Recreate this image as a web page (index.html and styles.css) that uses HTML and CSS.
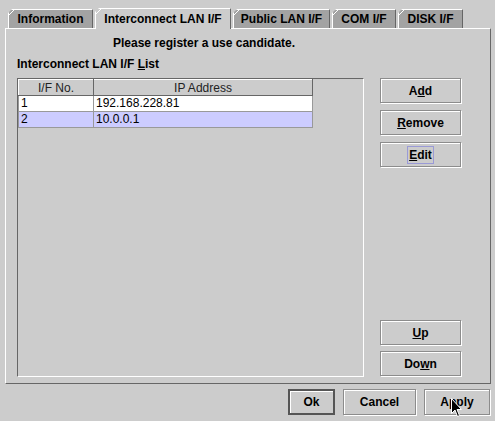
FILE: index.html
```html
<!DOCTYPE html>
<html lang="en">
<head>
    <meta charset="UTF-8">
    <title>Interconnect LAN I/F</title>
    <link rel="stylesheet" href="styles.css">
</head>
<body>
    <div class="window">
        <div class="tabs">
            <div class="tab tab-info">Information</div>
            <div class="tab tab-active">Interconnect LAN I/F</div>
            <div class="tab tab-public">Public LAN I/F</div>
            <div class="tab tab-com">COM I/F</div>
            <div class="tab tab-disk">DISK I/F</div>
        </div>

        <div class="panel">
            <p class="notice">Please register a use candidate.</p>
            <div class="list-label">Interconnect LAN I/F <u>L</u>ist</div>

            <div class="list-row">
                <div class="scroll-pane">
                    <table class="if-table">
                        <thead>
                            <tr>
                                <th class="col-no">I/F No.</th>
                                <th class="col-ip">IP Address</th>
                            </tr>
                        </thead>
                        <tbody>
                            <tr>
                                <td>1</td>
                                <td>192.168.228.81</td>
                            </tr>
                            <tr class="selected">
                                <td>2</td>
                                <td>10.0.0.1</td>
                            </tr>
                        </tbody>
                    </table>
                </div>

                <div class="side-buttons">
                    <button class="btn">A<u>d</u>d</button>
                    <button class="btn"><u>R</u>emove</button>
                    <button class="btn"><span class="focus-ring"><u>E</u>dit</span></button>
                    <button class="btn btn-up"><u>U</u>p</button>
                    <button class="btn">Do<u>w</u>n</button>
                </div>
            </div>
        </div>

        <div class="footer">
            <button class="btn btn-default btn-ok">Ok</button>
            <button class="btn btn-cancel">Cancel</button>
            <button class="btn btn-apply">A<u>p</u>ply</button>
        </div>

        <svg class="cursor" width="12" height="20" viewBox="0 0 12 20">
            <path d="M0.5 0.5 L0.5 15.5 L4 12 L6.5 18.5 L8.5 17.5 L6 11.5 L10.5 11.5 Z" fill="#000" stroke="#fff" stroke-width="1"/>
        </svg>
    </div>
</body>
</html>
```

FILE: styles.css
```css
* {
    margin: 0;
    padding: 0;
    box-sizing: border-box;
}

body {
    background: #cccccc;
    font-family: 'Liberation Sans', Arial, sans-serif;
    font-size: 12px;
    color: #000;
}

.window {
    position: relative;
    width: 495px;
    height: 421px;
    overflow: hidden;
}

/* tab strip */
.tabs {
    display: flex;
    align-items: flex-end;
    height: 20px;
    margin-top: 8px;
    padding-left: 8px;
}

.tab {
    height: 19px;
    margin-right: 2px;
    text-align: center;
    font-weight: bold;
    line-height: 18px;
    background:
        linear-gradient(135deg, transparent 3px, #ffffff 3px, #ffffff 4px, transparent 4px),
        #a3a3a3;
    border-left: 1px solid #ffffff;
    border-top: 1px solid #ffffff;
    border-right: 1px solid #666666;
    clip-path: polygon(4px 0, 100% 0, 100% 100%, 0 100%, 0 4px);
}

.tab-info   { width: 85px; }
.tab-public { width: 97px; }
.tab-com    { width: 64px; }
.tab-disk   { width: 65px; }

.tab-active {
    position: relative;
    z-index: 1;
    width: 136px;
    height: 21px;
    margin-bottom: -1px;
    line-height: 20px;
    background:
        linear-gradient(135deg, transparent 3px, #ffffff 3px, #ffffff 4px, transparent 4px),
        #cccccc;
}

/* tab content */
.panel {
    width: 486px;
    height: 356px;
    margin-left: 5px;
    padding: 6px 0 0 11px;
    border-top: 1px solid #ffffff;
    border-left: 1px solid #ffffff;
    border-right: 1px solid #666666;
    border-bottom: 1px solid #666666;
}

.notice {
    padding-left: 96px;
    height: 16px;
    line-height: 16px;
    font-weight: bold;
}

.list-label {
    margin-top: 5px;
    height: 16px;
    line-height: 16px;
    font-weight: bold;
}

.list-row {
    display: flex;
    margin-top: 6px;
}

.scroll-pane {
    width: 347px;
    height: 299px;
    border-top: 1px solid #666666;
    border-left: 1px solid #666666;
    border-right: 1px solid #ffffff;
    border-bottom: 1px solid #ffffff;
}

.if-table {
    border-collapse: collapse;
    table-layout: fixed;
    width: 295px;
}

.if-table th {
    height: 16px;
    font-weight: normal;
    color: #222;
    background: #cccccc;
    border-top: 1px solid #ffffff;
    border-left: 1px solid #ffffff;
    border-right: 1px solid #666666;
    border-bottom: 1px solid #666666;
    line-height: 14px;
}

.col-no { width: 75px; }

.if-table td {
    height: 16px;
    padding: 0 2px;
    line-height: 15px;
    background: #ffffff;
    border: 1px solid #999999;
    white-space: nowrap;
}

.if-table tr.selected td {
    background: #ccccff;
}

/* buttons */
.side-buttons {
    display: flex;
    flex-direction: column;
    margin-left: 16px;
    height: 298px;
}

.btn {
    width: 81px;
    height: 25px;
    margin-bottom: 7px;
    font-family: 'Liberation Sans', Arial, sans-serif;
    font-size: 12px;
    font-weight: bold;
    color: #000;
    background: #cccccc;
    border: 1px solid #8c8c8c;
    box-shadow: inset 1px 1px 0 #ffffff, 1px 1px 0 #ffffff;
}

.side-buttons .btn:last-child {
    margin-bottom: 0;
}

.btn-up {
    margin-top: auto;
    margin-bottom: 6px;
}

.focus-ring {
    padding: 1px 1px;
    border: 1px solid #9a9ad6;
}

.footer {
    display: flex;
    justify-content: flex-end;
    gap: 8px;
    margin-top: 5px;
    padding-right: 5px;
}

.footer .btn {
    height: 26px;
    margin-bottom: 0;
}

.btn-ok     { width: 47px; }
.btn-cancel { width: 73px; }
.btn-apply  { width: 66px; }

.btn-default {
    border: 2px solid #555555;
    box-shadow: inset 1px 1px 0 #ffffff;
}

.cursor {
    position: absolute;
    left: 451px;
    top: 398px;
}
```
